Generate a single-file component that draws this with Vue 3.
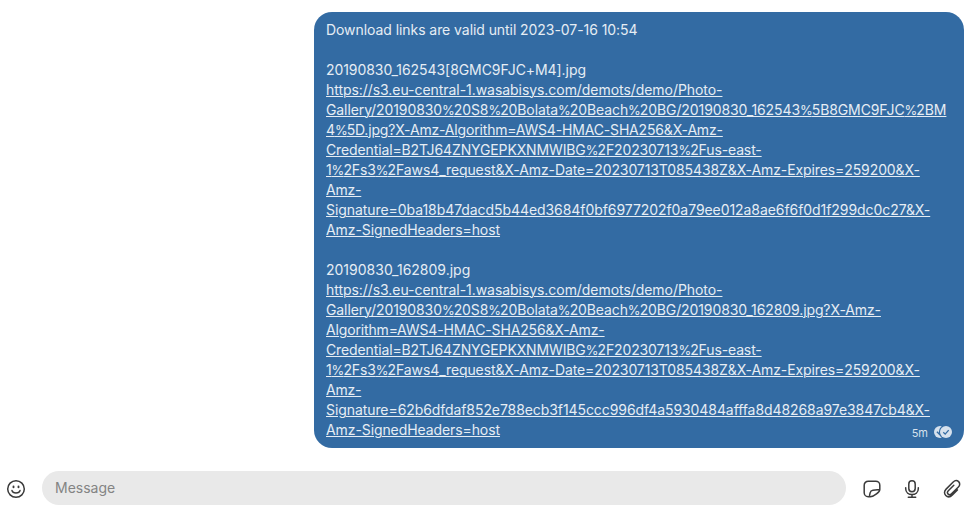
<script setup>
const line = (text, spacing) => ({ text, spacing })

const files = [
  {
    name: '20190830_162543[8GMC9FJC+M4].jpg',
    link: [
      line('https://s3.eu-central-1.wasabisys.com/demots/demo/Photo-', -0.054),
      line('Gallery/20190830%20S8%20Bolata%20Beach%20BG/20190830_162543%5B8GMC9FJC%2BM', -0.1),
      line('4%5D.jpg?X-Amz-Algorithm=AWS4-HMAC-SHA256&X-Amz-', -0.169),
      line('Credential=B2TJ64ZNYGEPKXNMWIBG%2F20230713%2Fus-east-', -0.126),
      line('1%2Fs3%2Faws4_request&X-Amz-Date=20230713T085438Z&X-Amz-Expires=259200&X-', -0.1),
      line('Amz-', -0.2),
      line('Signature=0ba18b47dacd5b44ed3684f0bf6977202f0a79ee012a8ae6f6f0d1f299dc0c27&X-', -0.065),
      line('Amz-SignedHeaders=host', -0.09),
    ],
  },
  {
    name: '20190830_162809.jpg',
    link: [
      line('https://s3.eu-central-1.wasabisys.com/demots/demo/Photo-', -0.054),
      line('Gallery/20190830%20S8%20Bolata%20Beach%20BG/20190830_162809.jpg?X-Amz-', -0.106),
      line('Algorithm=AWS4-HMAC-SHA256&X-Amz-', -0.15),
      line('Credential=B2TJ64ZNYGEPKXNMWIBG%2F20230713%2Fus-east-', -0.126),
      line('1%2Fs3%2Faws4_request&X-Amz-Date=20230713T085438Z&X-Amz-Expires=259200&X-', -0.1),
      line('Amz-', -0.2),
      line('Signature=62b6dfdaf852e788ecb3f145ccc996df4a5930484afffa8d48268a97e3847cb4&X-', -0.078),
      line('Amz-SignedHeaders=host', -0.09),
    ],
  },
]

const pieces = (text) => text.split(/(%)/)
</script>

<template>
  <main class="chat">
    <article class="bubble">
      <p class="intro">Download links are valid until 2023-07-16 10:54</p>
      <section v-for="(file, f) in files" :key="file.name" class="file">
        <p :class="{ tight: f === 0 }">{{ file.name }}</p>
        <a class="link">
          <span v-for="(row, i) in file.link" :key="i" class="row" :style="{ letterSpacing: row.spacing + 'px' }"><template v-for="(piece, j) in pieces(row.text)" :key="j"><span v-if="piece === '%'" class="percent">%</span><template v-else>{{ piece }}</template></template></span>
        </a>
      </section>
      <footer class="meta">
        <span>5m</span>
        <svg class="status" width="18" height="12" viewBox="0 0 18 12">
          <circle cx="6" cy="6" r="6" fill="#d6e1ed" />
          <path d="m2.9 5.8 3 3" fill="none" stroke="#336ba3" stroke-width="1.3" />
          <circle cx="12" cy="6" r="7.2" fill="#336ba3" />
          <circle cx="12" cy="6" r="6" fill="#d6e1ed" />
          <path d="m9.3 6.2 1.9 1.9 3.5-4" fill="none" stroke="#336ba3" stroke-width="1.3" />
        </svg>
      </footer>
    </article>

    <div class="composer">
      <svg class="icon" width="20" height="20" viewBox="0 0 20 20">
        <circle cx="10" cy="10" r="8.3" />
        <path d="M6 11.6c.8 3.2 7.2 3.2 8 0" />
        <ellipse class="solid" cx="7.5" cy="7.9" rx="1" ry="1.4" />
        <ellipse class="solid" cx="12.5" cy="7.9" rx="1" ry="1.4" />
      </svg>
      <div class="field">Message</div>
      <svg class="icon sticker" width="20" height="20" viewBox="0 0 20 20">
        <path d="M8.2 17.7h-2a4 4 0 0 1-4-4V6.2a4 4 0 0 1 4-4h7.6a4 4 0 0 1 4 4v4.2c0 2.4-5.6 7.3-9.6 7.3-.8 0-.8-.6-.6-1.6l.5-2.3c.4-1.8 1.1-2.4 2.8-2.6l6.8-.8" />
      </svg>
      <svg class="icon mic" width="20" height="20" viewBox="0 0 20 20">
        <rect x="6.8" y="1.7" width="6.4" height="11.1" rx="3.2" />
        <path d="M3.7 8.7v1.1c0 7.6 12.6 7.6 12.6 0V8.7M10 15.5v2.7M6.3 18.3h7.4" />
      </svg>
      <svg class="icon clip" width="20" height="20" viewBox="0 0 20 20">
        <path d="m15.4 10.9-5 5c-4.8 4.8-10.8-1.3-6.3-5.8L11.2 3c3.8-3.8 8.9 1.2 5.2 5l-6.9 6.9c-2.4 2.4-5.5-.8-3.2-3.1l5.5-5.5" />
      </svg>
    </div>
  </main>
</template>

<style>
body {
  margin: 0;
  background: #fff;
}
</style>

<style scoped>
.chat {
  box-sizing: border-box;
  width: 970px;
  height: 512px;
  padding: 12px 0 7px;
  display: flex;
  flex-direction: column;
  justify-content: space-between;
  overflow: hidden;
  font: 14px/20px Inter, sans-serif;
}
.bubble {
  position: relative;
  box-sizing: border-box;
  width: 650px;
  height: 436px;
  margin-left: 314px;
  padding: 8px 12px;
  border-radius: 18px;
  background: #336ba3;
  color: #e6edf4;
  white-space: nowrap;
}
p {
  margin: 0;
}
.intro,
.tight {
  letter-spacing: -0.065px;
}
.file {
  margin-top: 20px;
}
.link {
  display: flex;
  flex-direction: column;
  align-items: flex-start;
}
.row {
  height: 20px;
  text-decoration: underline;
  text-decoration-thickness: 1px;
}
.percent {
  font-size: 13px;
  line-height: 1;
  letter-spacing: -1px;
}
.meta {
  position: absolute;
  right: 12px;
  bottom: 8px;
  display: flex;
  align-items: center;
  gap: 6px;
  font-size: 11px;
  line-height: 14px;
  color: #d6e1ed;
}
.status {
  display: block;
  margin-bottom: 2px;
}
.composer {
  display: flex;
  align-items: center;
  height: 34px;
  padding-left: 6px;
}
.icon {
  flex: none;
  margin-top: 2px;
  fill: none;
  stroke: #3b3b3b;
  stroke-width: 1.5;
  stroke-linecap: round;
  stroke-linejoin: round;
}
.solid {
  fill: #3b3b3b;
  stroke: none;
}
.field {
  box-sizing: border-box;
  width: 804px;
  height: 34px;
  margin-left: 16px;
  padding: 7px 13px;
  border-radius: 17px;
  background: #e9e9e9;
  color: #848484;
}
.sticker {
  margin-left: 16px;
}
.mic,
.clip {
  margin-left: 20px;
}
</style>
